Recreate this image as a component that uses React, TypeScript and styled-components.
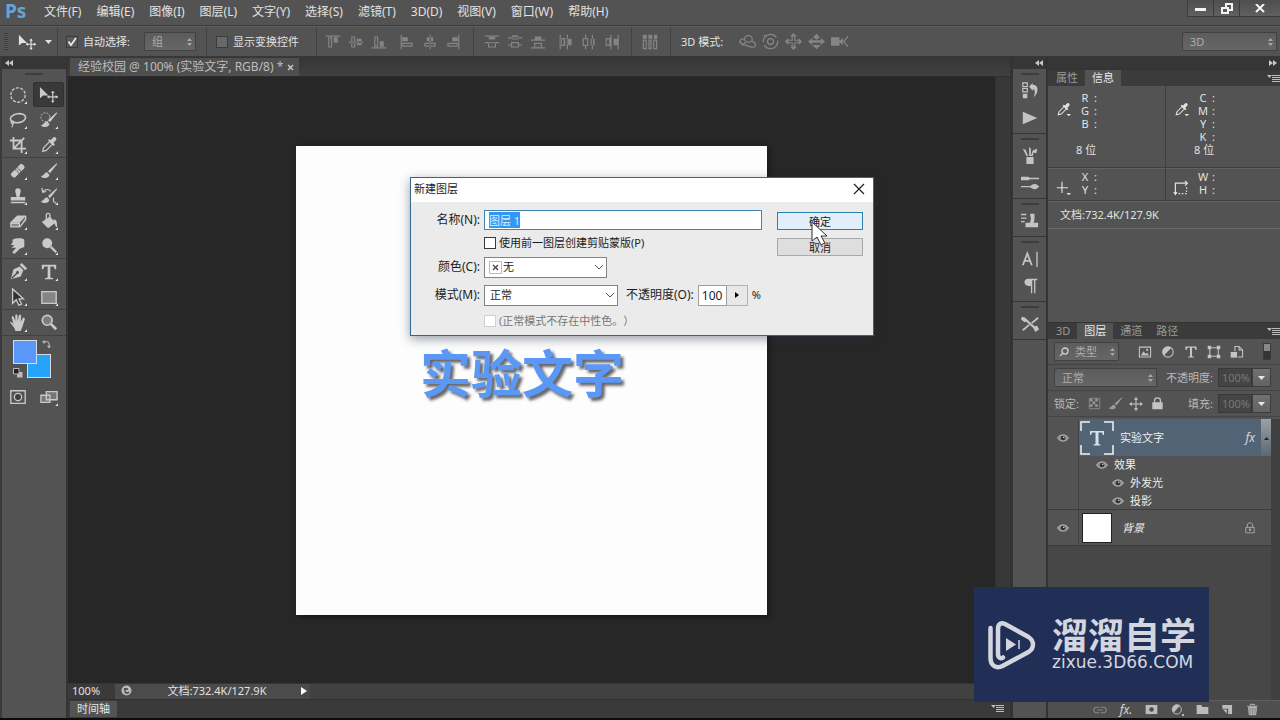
import React, { useEffect, useRef } from "react";
import styled, { createGlobalStyle, css } from "styled-components";

const GlobalStyle = createGlobalStyle`
  * { box-sizing: border-box; }
  body {
    margin: 0;
    background: #0b0b0b;
    color: #e2e2e2;
    font-family: "Noto Sans", "Noto Sans CJK SC", sans-serif;
    font-size: 11px;
    line-height: 16px;
  }
  button, input, select { font: inherit; color: inherit; margin: 0; }
  button { padding: 0; border: 0; background: none; }
  ul { list-style: none; margin: 0; padding: 0; }
  svg { display: block; flex: none; }
`;

/* ---------- frame ---------- */

const Screen = styled.div`
  position: relative;
  min-height: 100vh;
  display: flex;
  flex-direction: column;
  padding-bottom: 2px;
  overflow: hidden;
`;

const MenuBar = styled.header`
  display: flex;
  align-items: center;
  height: 26px;
  background: #535353;
  border-bottom: 1px solid #3a3a3a;
  font-size: 12px;
`;

const Logo = styled.span`
  width: 44px;
  padding: 0 0 3px 5px;
  color: #68a4d4;
  font-size: 19px;
  line-height: 22px;
  font-weight: 700;
`;

const Menus = styled.nav`
  display: flex;
  gap: 15px;
`;

const MenuButton = styled.button`
  white-space: nowrap;
  padding-bottom: 2px;
`;

const WindowControls = styled.div`
  display: flex;
  align-self: flex-start;
  margin-left: auto;
`;

const WindowButton = styled.button<{ $wide?: boolean }>`
  width: ${(p) => (p.$wide ? 41 : 26)}px;
  height: 17px;
  display: grid;
  place-items: center;
  color: #f4f4f4;
  background: linear-gradient(#4e4e4e, #606060);
  border: solid #3c3c3c;
  border-width: 0 0 1px 1px;
`;

const OptionsBar = styled.div`
  display: flex;
  align-items: stretch;
  height: 31px;
  background: #535353;
  border-top: 1px solid #606060;
  border-bottom: 1px solid #383838;
`;

const OptionGroup = styled.div<{ $start: number; $end: number; $gap?: number; $last?: boolean }>`
  display: flex;
  align-items: center;
  gap: ${(p) => p.$gap ?? 5}px;
  padding: 0 ${(p) => p.$end}px 0 ${(p) => p.$start}px;
  border-right: ${(p) => (p.$last ? "0" : "1px solid #424242")};
  white-space: nowrap;
`;

const IconStrip = styled.div<{ $dim?: boolean }>`
  display: flex;
  color: ${(p) => (p.$dim ? "#858585" : "#c4c4c4")};
`;

const IconButton = styled.button<{ $width?: number }>`
  width: ${(p) => p.$width ?? 23}px;
  height: 20px;
  display: grid;
  place-items: center;
`;

const GripDots = styled.span`
  width: 4px;
  height: 17px;
  background: repeating-linear-gradient(#3a3a3a 0 1px, #5d5d5d 1px 2px);
`;

const OptionLabel = styled.label`
  display: flex;
  align-items: center;
  gap: 5px;
`;

const DarkCheck = styled.input`
  appearance: none;
  width: 12px;
  height: 12px;
  background: #686868;
  border: 1px solid #3b3b3b;
  &:checked {
    background: #5b5b5b url("data:image/svg+xml,%3Csvg xmlns='http://www.w3.org/2000/svg' viewBox='0 0 10 10'%3E%3Cpath d='M1.5 4.5 4 8 9 1' fill='none' stroke='%23eee' stroke-width='1.6'/%3E%3C/svg%3E") center / 10px no-repeat;
  }
`;

const Stack = styled.span<{ $width: number; $height: number }>`
  display: grid;
  align-items: center;
  width: ${(p) => p.$width}px;
  height: ${(p) => p.$height}px;
  > * { grid-area: 1 / 1; }
  > svg { pointer-events: none; }
`;

const DarkSelectBox = styled.select<{ $indent?: number }>`
  appearance: none;
  width: 100%;
  height: 100%;
  padding: 0 14px 0 ${(p) => p.$indent ?? 7}px;
  color: #adadad;
  background: linear-gradient(#5c5c5c, #666);
  border: 1px solid #414141;
  border-radius: 1px;
  outline: 0;
`;

const EndMark = styled.svg`
  justify-self: end;
  margin-right: 3px;
`;

const StartMark = styled.svg`
  justify-self: start;
  margin-left: 5px;
`;

const Spacer = styled.span`
  flex: 1;
`;

const Workspace = styled.div`
  flex: 1;
  display: flex;
  align-items: stretch;
  background: #3a3a3a;
`;

/* ---------- tools ---------- */

const ToolsColumn = styled.aside`
  width: 68px;
  flex: none;
  display: flex;
  flex-direction: column;
  border-left: 2px solid #3a3a3a;
  border-right: 2px solid #343434;
`;

const CollapseBar = styled.button<{ $right?: boolean }>`
  display: flex;
  align-items: center;
  justify-content: ${(p) => (p.$right ? "flex-end" : "flex-start")};
  height: 12px;
  padding: 0 3px;
  background: #363636;
  color: #c8c8c8;
`;

const ToolsBody = styled.div`
  flex: 1;
  background: #535353;
`;

const Grip = styled.div<{ $space: number }>`
  height: ${(p) => p.$space}px;
  display: flex;
  justify-content: center;
  padding-top: 4px;
  &::before {
    content: "";
    width: 18px;
    height: 2px;
    background: #3d3d3d;
  }
`;

const ToolGroup = styled.div`
  display: grid;
  grid-template-columns: 31px 31px;
  border-bottom: 1px solid #414141;
  &:last-of-type { border-bottom: 0; }
`;

const ToolButton = styled.button<{ $active?: boolean }>`
  height: 25px;
  display: grid;
  place-items: center;
  color: #c9c9c9;
  ${(p) =>
    p.$active &&
    css`
      background: #393939;
      border: 1px solid #313131;
      border-radius: 2px;
    `}
`;

const SwatchGroup = styled.div`
  display: grid;
  grid-template-columns: 14px 10px 14px;
  grid-template-rows: 14px 10px 14px;
  padding: 4px 0 6px 11px;
`;

const Swatch = styled.button<{ $front?: boolean }>`
  grid-area: ${(p) => (p.$front ? "1 / 1 / 3 / 3" : "2 / 2 / 4 / 4")};
  z-index: ${(p) => (p.$front ? 1 : 0)};
  background: ${(p) => (p.$front ? "#5a97fb" : "#27a3fb")};
  border: 1px solid #d6dae2;
`;

const SwatchAction = styled.button<{ $swap?: boolean }>`
  grid-area: ${(p) => (p.$swap ? "1 / 3" : "3 / 1")};
  place-self: ${(p) => (p.$swap ? "start end" : "end start")};
  color: #bbb;
`;

/* ---------- document ---------- */

const DocumentColumn = styled.main`
  flex: 1;
  min-width: 0;
  display: flex;
  flex-direction: column;
`;

const DocTabs = styled.div`
  display: flex;
  align-items: flex-end;
  height: 20px;
  padding-left: 2px;
  background: linear-gradient(#363636, #404040);
  border-bottom: 1px solid #2c2c2c;
`;

const DocTab = styled.div`
  display: flex;
  align-items: center;
  gap: 4px;
  height: 18px;
  padding: 0 5px 0 8px;
  background: #4f4f4f;
  color: #bdbdbd;
  font-size: 12px;
  white-space: nowrap;
`;

const Stage = styled.div`
  flex: 1;
  display: flex;
  background: #272727;
`;

const Pasteboard = styled.div`
  flex: 1;
  display: grid;
  place-items: center;
`;

const VerticalScroll = styled.div`
  width: 15px;
  background: #383838;
  border-left: 1px solid #303030;
`;

const Artboard = styled.div`
  width: 471px;
  height: 469px;
  padding: 189px 0 0 124px;
  background: #fdfdfd;
  box-shadow: 2px 2px 5px #161616;
`;

const ArtText = styled.p`
  margin: 0;
  color: #5b97f5;
  font-family: "Noto Sans CJK SC", sans-serif;
  font-size: 51px;
  line-height: 72px;
  font-weight: 700;
  white-space: nowrap;
  text-shadow: 3px 3px 3px #66666b;
`;

const StatusBar = styled.div`
  display: flex;
  height: 16px;
  background: #414141;
  border-top: 1px solid #353535;
`;

const StatusCell = styled.div<{ $width: number; $lit?: boolean }>`
  width: ${(p) => p.$width}px;
  display: flex;
  align-items: center;
  justify-content: center;
  line-height: 13px;
  padding-bottom: 2px;
  background: ${(p) => (p.$lit ? "#4b4b4b" : "#3a3a3a")};
`;

const ZoomInput = styled.input`
  width: 100%;
  height: 13px;
  padding: 0 0 0 4px;
  border: 0;
  background: none;
`;

const TimelineBar = styled.div`
  display: flex;
  align-items: center;
  justify-content: space-between;
  height: 19px;
  padding: 0 6px 1px 1px;
  background: #3a3a3a;
  border-top: 1px solid #303030;
`;

/* ---------- side panels ---------- */

const DockColumn = styled.aside`
  width: 38px;
  flex: none;
  display: flex;
  flex-direction: column;
  border-left: 3px solid #333;
  border-right: 2px solid #333;
`;

const DockBody = styled.div`
  flex: 1;
  background: #535353;
  color: #c4c4c4;
`;

const DockGroup = styled.div`
  display: flex;
  flex-direction: column;
  align-items: center;
  padding-bottom: 2px;
  border-bottom: 1px solid #363636;
  > div { align-self: stretch; }
`;

const DockButton = styled.button`
  width: 31px;
  height: 27px;
  display: grid;
  place-items: center;
`;

const PanelColumn = styled.aside`
  width: 232px;
  flex: none;
  display: flex;
  flex-direction: column;
  background: #535353;
`;

const TabRow = styled.div`
  display: flex;
  align-items: stretch;
  height: 17px;
  flex: none;
  background: #3b3b3b;
  border-top: 1px solid #333;
`;

const PanelTab = styled.button<{ $active?: boolean }>`
  padding: 0 7px;
  color: ${(p) => (p.$active ? "#e6e6e6" : "#9a9a9a")};
  background: ${(p) => (p.$active ? "#535353" : "transparent")};
  white-space: nowrap;
  &:first-child { margin-left: 1px; }
`;

const PanelMenu = styled.button`
  margin-left: auto;
  color: #bdbdbd;
`;

const InfoGrid = styled.div<{ $tall?: boolean }>`
  display: grid;
  grid-template-columns: 118px 1fr;
  height: ${(p) => (p.$tall ? 82 : 33)}px;
  border-bottom: 1px solid #3f3f3f;
  box-shadow: 0 1px #626262;
`;

const InfoCell = styled.div<{ $top: number }>`
  display: grid;
  grid-template-columns: 30px 14px 1fr;
  grid-auto-rows: 13px;
  align-content: start;
  padding-top: ${(p) => p.$top}px;
  line-height: 13px;
  border-right: 1px solid #3f3f3f;
  &:last-child { border-right: 0; }
`;

const InfoIcon = styled.span`
  grid-area: 1 / 1 / 3 / 2;
  display: grid;
  place-items: end center;
`;

const InfoKey = styled.span`
  grid-column: 2;
  text-align: center;
`;

const InfoColon = styled.span`
  grid-column: 3;
  padding-left: 2px;
`;

const BitDepth = styled.span`
  grid-row: 5;
  grid-column: 1 / 4;
  padding-left: 28px;
`;

const DocSize = styled.p`
  margin: 0;
  height: 28px;
  padding: 6px 12px;
  border-bottom: 1px solid #696969;
`;

const InfoRest = styled.div`
  height: 93px;
`;

const LayerRow = styled.div`
  display: flex;
  align-items: center;
  height: 26px;
  flex: none;
  padding: 0 9px 0 6px;
  color: #b9b9b9;
  border-bottom: 1px solid #444;
  white-space: nowrap;
`;

const FieldLabel = styled.label<{ $push?: boolean }>`
  margin-left: ${(p) => (p.$push ? "auto" : "0")};
  margin-right: 5px;
`;

const Percent = styled.input`
  width: 34px;
  height: 19px;
  padding: 0 1px;
  text-align: right;
  color: #787878;
  background: #444;
  border: 1px solid #393939;
`;

const DropButton = styled.button`
  width: 19px;
  height: 19px;
  display: grid;
  place-items: center;
  color: #e8e8e8;
  background: linear-gradient(#727272, #626262);
  border: 1px solid #3c3c3c;
`;

const FilterSwitch = styled.button`
  width: 8px;
  height: 17px;
  margin-left: auto;
  background: linear-gradient(#888 0 7px, #343434 7px);
  border: 1px solid #3a3a3a;
`;

const LayerList = styled.ul`
  flex: 1;
  margin-top: 2px;
  padding-right: 9px;
  background: linear-gradient(to right, #474747 0 223px, #404040 223px);
`;

const LayerItem = styled.li<{ $height: number; $end?: boolean }>`
  display: flex;
  align-items: stretch;
  height: ${(p) => p.$height}px;
  background: #535353;
  border-bottom: ${(p) => (p.$end ? "1px solid #3c3c3c" : "0")};
`;

const EyeCell = styled.span`
  width: 31px;
  display: grid;
  place-items: center;
  border-right: 1px solid #424242;
`;

const LayerBody = styled.div<{ $selected?: boolean; $indent?: number }>`
  flex: 1;
  display: flex;
  align-items: center;
  gap: 6px;
  padding-left: ${(p) => p.$indent ?? 1}px;
  background: ${(p) => (p.$selected ? "#526376" : "transparent")};
`;

const Thumb = styled.span`
  width: 30px;
  height: 30px;
  margin: 0 2px;
  background: #fff;
  border: 1px solid #222;
`;

const LayerName = styled.span<{ $italic?: boolean }>`
  flex: 1;
  color: #f0f0f0;
  font-style: ${(p) => (p.$italic ? "italic" : "normal")};
  padding-left: ${(p) => (p.$italic ? 2 : 0)}px;
`;

const FxMark = styled.span`
  color: #d3d8dc;
  font-family: "Noto Sans", sans-serif;
  font-style: italic;
  font-size: 12px;
`;

const FxToggle = styled.button`
  width: 10px;
  align-self: stretch;
  display: grid;
  place-items: center;
  color: #222;
  background: linear-gradient(#9ba1a6, #5c6770);
`;

const EffectRow = styled.span`
  display: flex;
  align-items: center;
  gap: 6px;
  color: #eee;
`;

const LockMark = styled.span`
  padding-right: 15px;
  color: #ababab;
`;

const PanelFooter = styled.div`
  display: flex;
  align-items: center;
  justify-content: flex-end;
  height: 18px;
  flex: none;
  padding-right: 15px;
  color: #bcbcbc;
  background: #4f4f4f;
  border-top: 1px solid #5e5e5e;
`;

/* ---------- new layer dialog ---------- */

const Dialog = styled.form`
  position: absolute;
  left: 410px;
  top: 177px;
  width: 464px;
  color: #1c1c1c;
  background: #ebebeb;
  border: 1px solid #31688f;
  box-shadow: 0 3px 10px rgba(30, 45, 60, 0.45);
`;

const DialogTitle = styled.div`
  display: flex;
  align-items: center;
  justify-content: space-between;
  height: 24px;
  padding: 0 8px 2px 3px;
  background: #fff;
`;

const DialogBody = styled.div`
  display: grid;
  grid-template-columns: 351px 86px;
  column-gap: 15px;
  padding: 8px 10px 6px 0;
`;

const Fields = styled.div`
  display: flex;
  flex-direction: column;
`;

const Field = styled.div<{ $height: number; $muted?: boolean }>`
  display: flex;
  align-items: center;
  height: ${(p) => p.$height}px;
  color: ${(p) => (p.$muted ? "#777" : "inherit")};
  white-space: nowrap;
  text-spacing-trim: space-all;
`;

const Caption = styled.label`
  width: 73px;
  padding-right: 4px;
  text-align: right;
  font-size: 12px;
`;

const NameInput = styled.input`
  flex: 1;
  min-width: 0;
  height: 20px;
  padding: 0 4px;
  background: #fff;
  border: 1px solid #3c87b3;
  outline: 0;
  &::selection { background: #3296f3; color: #d8efff; }
`;

const CheckLine = styled.label`
  display: flex;
  align-items: center;
  gap: 3px;
  margin-left: 73px;
`;

const LightCheck = styled.input`
  appearance: none;
  width: 12px;
  height: 12px;
  background: #fff;
  border: 1px solid #3a3a3a;
  &:disabled { border-color: #d0d0d0; }
`;

const LightSelect = styled.select<{ $indent?: number }>`
  appearance: none;
  width: 100%;
  height: 100%;
  padding: 0 20px 0 ${(p) => p.$indent ?? 5}px;
  background: #fff;
  border: 1px solid #828282;
`;

const OpacityLabel = styled.label`
  margin: 0 4px 0 8px;
  font-size: 12px;
`;

const OpacityInput = styled.input`
  width: 29px;
  height: 21px;
  padding: 0 3px;
  background: #fff;
  border: 1px solid #9d9d9d;
  font-size: 12px;
`;

const OpacityButton = styled.button`
  width: 21px;
  height: 21px;
  margin-right: 4px;
  display: grid;
  place-items: center;
  background: #e8e8e8;
  border: 1px solid #b3b3b3;
  border-left: 0;
`;

const DialogActions = styled.div`
  display: flex;
  flex-direction: column;
  gap: 8px;
  padding-top: 2px;
`;

const DialogButton = styled.button<{ $primary?: boolean }>`
  height: 18px;
  padding-top: 1px;
  line-height: 15px;
  background: ${(p) => (p.$primary ? "#e2effa" : "#dedede")};
  border: 1px solid ${(p) => (p.$primary ? "#2b7fae" : "#a9a9a9")};
`;

const Pointer = styled.svg`
  position: absolute;
  left: 811px;
  top: 221px;
`;

/* ---------- brand badge ---------- */

const Badge = styled.div`
  position: absolute;
  right: 71px;
  bottom: 18px;
  width: 235px;
  height: 115px;
  display: flex;
  align-items: center;
  gap: 16px;
  padding-left: 13px;
  background: #212f56;
  color: #d3d6df;
`;

const BadgeText = styled.div`
  display: flex;
  flex-direction: column;
  padding-bottom: 5px;
`;

const BadgeName = styled.strong`
  font-family: "Noto Sans CJK SC", sans-serif;
  font-size: 36px;
  line-height: 40px;
  font-weight: 700;
`;

const BadgeUrl = styled.span`
  font-family: "DejaVu Sans", sans-serif;
  font-size: 17px;
  line-height: 18px;
`;

/* ---------- icons ---------- */

type GlyphProps = { size?: number; children: React.ReactNode; corner?: boolean };

const Glyph = ({ size = 16, children, corner }: GlyphProps) => (
  <svg width={size} height={size} viewBox="0 0 20 20" fill="none" stroke="currentColor" strokeWidth="1.5" aria-hidden>
    {children}
    {corner && <path d="M20 17v3h-3z" fill="#e5e5e5" stroke="none" />}
  </svg>
);

const fill = { fill: "currentColor", stroke: "none" };

const Arrows = () => (
  <EndMark width="7" height="10" viewBox="0 0 7 10" fill="#a8a8a8" aria-hidden>
    <path d="M1 4 3.500 1 6 4zM1 6h5L3.500 9z" />
  </EndMark>
);

const Caret = ({ up }: { up?: boolean }) => (
  <svg width="7" height="4" viewBox="0 0 7 4" fill="currentColor" aria-hidden>
    <path d={up ? "M1 4h5L3.500 1z" : "M0 0h7L3.500 4z"} />
  </svg>
);

const DoubleArrow = ({ flip }: { flip?: boolean }) => (
  <svg width="8" height="6" viewBox="0 0 8 6" fill="currentColor" aria-hidden>
    <path d={flip ? "M0 0v6l4-3zM4 0v6l4-3z" : "M4 0v6L0 3zM8 0v6L4 3z"} />
  </svg>
);

const MenuGlyph = () => (
  <svg width="13" height="9" viewBox="0 0 13 9" fill="currentColor" aria-hidden>
    <path d="M0 1h5L2.500 4zM5 1h8v1H5zM5 3h8v1H5zM5 5h8v1H5zM5 7h8v1H5z" />
  </svg>
);

const Eye = () => (
  <svg width="12" height="10" viewBox="0 0 12 10" aria-hidden>
    <path d="M.5 5C3 .8 9 .8 11.500 5 9 9.200 3 9.200.5 5z" fill="#8e8e8e" stroke="#c2c2c2" strokeWidth=".8" />
    <circle cx="6" cy="5" r="2.300" fill="#333" />
    <circle cx="6.800" cy="4.200" r=".8" fill="#ddd" />
  </svg>
);

const MoveGlyph = ({ size = 19 }: { size?: number }) => (
  <Glyph size={size}>
    <path d="M1 2v12l3.500-3H10z" {...fill} />
    <path d="M14.500 7v11M9 12.500h11" strokeWidth="1.300" />
    <path d="m14.500 6 2 2.500h-4zM14.500 19l2-2.500h-4zM8.500 12.500l2.500-2v4zM20 12.500l-2.500-2v4z" {...fill} />
  </Glyph>
);

const Eyedropper = () => (
  <>
    <path d="m3 17 1-4 7-7 3 3-7 7z" strokeWidth="1.400" />
    <path d="m9 5 6 6 1.500-1.500-1.500-2 3-3c1-2-1.500-4-3-3l-3 3-2-1z" {...fill} />
  </>
);

const InfoDropper = () => (
  <Glyph size={15}>
    <Eyedropper />
    <path d="M14 16h6l-3 3z" {...fill} />
  </Glyph>
);

const Brush = () => (
  <>
    <path d="M18.500 1.500 9 10l2 2.500 8-10z" {...fill} />
    <path d="M8 11.500c-3 0-3 3.500-7 4.500 3 2.500 8.500 2.500 9.500-1.500z" {...fill} />
  </>
);

const toolGroups: { name: string; art: React.ReactNode; active?: boolean; plain?: boolean }[][] = [
  [
    { name: "椭圆选框工具", art: <circle cx="10" cy="10" r="8" strokeDasharray="3.500 1.500" /> },
    { name: "移动工具", art: null, active: true, plain: true },
    {
      name: "套索工具",
      art: (
        <>
          <ellipse cx="10" cy="8" rx="8.500" ry="5" transform="rotate(-8 10 8)" strokeWidth="1.800" />
          <path d="M4 11c-2 1-2 3 0 3s2-2 0-3m0 3c1 2 0 3-1 4" />
        </>
      ),
    },
    {
      name: "快速选择工具",
      art: (
        <>
          <circle cx="6" cy="7" r="5" strokeDasharray="2 1.500" strokeWidth="1" />
          <Brush />
        </>
      ),
    },
    { name: "裁剪工具", art: <path d="M5 1v13h14M1 5h13v14M17 2 5 14" strokeWidth="2" /> },
    { name: "吸管工具", art: <Eyedropper /> },
  ],
  [
    {
      name: "污点修复画笔工具",
      art: (
        <>
          <path d="m2.500 12.500 10-10c2-1.500 6 2.500 4.500 4.500l-10 10c-2 1.500-6-2.500-4.500-4.500z" {...fill} />
          <path d="m7 8 4.500 4.500M9 6l4.500 4.500" stroke="#666" strokeDasharray="1.500 1" />
        </>
      ),
    },
    { name: "画笔工具", art: <Brush /> },
    {
      name: "仿制图章工具",
      art: <path d="M7 5c-1-5 7-5 6 0l-1.500 6H18v4H2v-4h6.500zM2 16.500h16V18H2z" {...fill} />,
    },
    {
      name: "历史记录画笔工具",
      art: (
        <>
          <Brush />
          <path d="M3 5c3-3 7-3 9 0M2 1l1 5 4-1M15 12v4l3 2" strokeWidth="1.300" />
        </>
      ),
    },
    {
      name: "橡皮擦工具",
      art: (
        <>
          <path d="m1 12 8-8h10l-7 8z" {...fill} />
          <path d="M2 12.500h9.500v4H2zM12 16.500l6.500-8v-4" fill="#8a8a8a" />
        </>
      ),
    },
    {
      name: "油漆桶工具",
      art: (
        <>
          <path d="m2 11 9-6 6 7-8 6z" {...fill} />
          <path d="M7 9V3c0-2 4-2 4 0v5" />
          <path d="M15 8c4 0 4 4 4 9-2 0-2-4-4-5z" {...fill} />
        </>
      ),
    },
    {
      name: "涂抹工具",
      art: <path d="M4 3c4-2 11-2 13 0v8l-5 2-6 6-2.500-2L8 12H3l3-3H2l2-3z" {...fill} />,
    },
    {
      name: "减淡工具",
      art: (
        <>
          <circle cx="8" cy="7" r="5.500" {...fill} />
          <path d="m12 11 6 6" strokeWidth="2.500" />
        </>
      ),
    },
  ],
  [
    {
      name: "钢笔工具",
      art: (
        <>
          <path d="m2 18 3-11 7-3 4 4-3 7z" {...fill} />
          <path d="m13 1 6 6" strokeWidth="3" />
          <path d="m3 17 6-6" stroke="#484848" />
          <circle cx="9.500" cy="10.500" r="1.500" fill="#484848" stroke="none" />
        </>
      ),
    },
    { name: "文字工具", art: <path d="M2 2h16v5h-1.500L15 4h-3.500v12l3 1v1h-9v-1l3-1V4H5L3.500 7H2z" {...fill} /> },
    { name: "路径选择工具", art: <path d="M4 1v16l4-4 3 6 3-1-3-6h5z" fill="#303030" /> },
    { name: "矩形工具", art: <path d="M2 4h16v13H2z" fill="#858585" /> },
  ],
  [
    {
      name: "抓手工具",
      art: <path d="M1 9c1-1 3 1 4 2L3 4c0-2 2-2 2.500 0L7 8V2c0-2 2.500-2 2.500 0v6L11 2c0-2 3-1 2.500 0L13 9l2-4c1-2 3-1 2.500 1L15 14l-2 5H7c0-3-4-7-6-10z" {...fill} />,
    },
    {
      name: "缩放工具",
      art: (
        <>
          <circle cx="8" cy="7" r="5.500" fill="#7c7c7c" strokeWidth="1.800" />
          <path d="m12 11 6 6" strokeWidth="3" />
        </>
      ),
      plain: true,
    },
  ],
];

const alignArt = [
  "M1 2h18v1.500H1zM11 4h5v7h-5zM4 4h5v13H4zM5.500 5.500v10h2v-10z",
  "M1 9.500h18V11H1zM11 6h6v8h-6zM4 3h5v14H4zM5.500 4.500v11h2v-11z",
  "M1 16.500h18V18H1zM11 9h5v7h-5zM4 3h5v13H4zM5.500 4.500v10h2v-10z",
];
const alignSideArt = [
  "M2 1h1.500v18H2zM4 4h7v5H4zM4 11h13v5H4zM5.500 12.500v2h10v-2z",
  "M9.500 1H11v18H9.500zM6 4h8v5H6zM3 11h14v5H3zM4.500 12.500v2h11v-2z",
  "M16.500 1H18v18h-1.500zM9 4h7v5H9zM3 11h13v5H3zM4.500 12.500v2h10v-2z",
];
const spreadArt = [
  "M1 2h18v1.500H1zM6 3h8v4H6zM1 10h18v1.500H1zM5 11h10v6H5zM6.500 12v3.500h7V12z",
  "M1 4h18v1.500H1zM6 2h8v5H6zM1 13h4v1.500H1zM15 13h4v1.500h-4zM5 10h10v7H5zM6.500 11.500v4h7v-4z",
  "M1 7h18v1.500H1zM6 3h8v4H6zM1 16.500h18V18H1zM5 11h10v6H5zM6.500 12.500V16h7v-3.500z",
];
const spreadSideArt = [
  "M2 1h1.500v18H2zM3 5h6v10H3zM4.500 6.500v7H7v-7zM11 1h1.500v18H11zM12 6h5v8h-5z",
  "M2 5h7v10H2zM3.500 6.500v7h4v-7zM5 1h1.500v4H5zM5 15h1.500v4H5zM13.500 1H15v18h-1.500zM12 6h5v8h-5z",
  "M8 1h1.500v18H8zM2 5h6v10H2zM3.500 6.500v7h3v-7zM17 1h1.500v18H17zM12 6h5v8h-5z",
];

const Shape = ({ d }: { d: string }) => (
  <Glyph>
    <path d={d} {...fill} fillRule="evenodd" />
  </Glyph>
);

const alignNames = ["顶对齐", "垂直居中对齐", "底对齐"];
const alignSideNames = ["左对齐", "水平居中对齐", "右对齐"];
const spreadNames = ["按顶分布", "垂直居中分布", "按底分布"];
const spreadSideNames = ["按左分布", "水平居中分布", "按右分布"];

const Strip = ({ names, art }: { names: string[]; art: string[] }) => (
  <IconStrip $dim>
    {names.map((name, i) => (
      <IconButton key={name} aria-label={name}>
        <Shape d={art[i]} />
      </IconButton>
    ))}
  </IconStrip>
);

const modes3d: [string, React.ReactNode][] = [
  ["旋转 3D 对象", <><ellipse cx="11" cy="7" rx="4.500" ry="4" /><path d="M7 7c-8 0-8 6 0 7l8 3c6 0 6-6 0-7M1 10l3 4 4-3" /></>],
  ["滚动 3D 对象", <><circle cx="10" cy="10" r="8.500" strokeDasharray="22 4" /><circle cx="10" cy="10" r="3.500" /><path d="m2 2 4 1-3 3z" {...fill} /></>],
  ["拖动 3D 对象", <><path d="M8.500 2v6.500H2M11.500 2v6.500H18M8.500 18v-6.500H2M11.500 18v-6.500H18" strokeWidth="1.300" /><path d="M6 4l4-4 4 4zM6 16l4 4 4-4zM4 6l-4 4 4 4zM16 6l4 4-4 4z" {...fill} /></>],
  ["滑动 3D 对象", <><path d="M0 10l5-4v2.500h10V6l5 4-5 4v-2.500H5V14zM6 5l4-4 4 4-4 3zM5 14h10l-5 5z" {...fill} /></>],
  ["缩放 3D 对象", <><path d="M0 5h10v10H0zM10 9l4-3v8l-4-3z" {...fill} /><path d="m20 4-5 6 5 6" /></>],
];

const lockPath = "M3 9h14v9H3zM5.500 9V5c0-5 9-5 9 0v4";

const dockGroups: [string, React.ReactNode][][] = [
  [
    ["历史记录", <><path d="M2 1h5v4H2zM2 7h5v4H2z" strokeWidth="1.300" /><path d="M2 13h5v5H2zM9 5l4-4v2c7 0 7 9 1 14 2-5 2-9-1-9v2z" {...fill} /></>],
    ["动作", <path d="m2 3 16 7-16 7z" {...fill} />],
  ],
  [
    ["画笔预设", <><path d="M6 11h8v8H6zM2 2l3 1 3 7H6zM9 0l2 2v8H9zM13 4l5-2-1 5-3-1-1 4h-2z" {...fill} /></>],
    ["画笔", <><path d="M0 5h20M0 14h20" /><path d="M0 3h8l3 2-3 2H0zM10 14c2-4 9-4 9 0s-7 4-9 0z" {...fill} /></>],
  ],
  [["仿制源", <><path d="M10 2h5v6l-1 4h5v5H5v-5h5l1-4zM0 2h6v1.500H0zM0 6h6v1.500H0zM0 10h4v1.500H0z" {...fill} /></>]],
  [
    ["字符", <><path d="m2 17 5-13 5 13M4 12h6" strokeWidth="2" /><path d="M17 2h1.500v17H17z" {...fill} /></>],
    ["段落", <path d="M8 2h10v1.500h-2V18h-1.500V3.500h-2V18H11v-8C2 11 2 2 8 2z" {...fill} />],
  ],
  [["工具预设", <><path d="m2 17 7-6M12 9l7-6" strokeWidth="2" /><path d="m5 5 11 10" strokeWidth="2.500" /><path d="M1 2l4 1 2 4-3 1-4-3zM13 13l5-1 2 4-4 3z" {...fill} /></>]],
];

const filterArt: [string, React.ReactNode][] = [
  ["像素图层滤镜", <><path d="M2 3h16v14H2z" /><path d="m4 15 4-6 3 4 2-2 3 4z" {...fill} /><circle cx="13" cy="7" r="1.500" {...fill} /></>],
  ["调整图层滤镜", <><circle cx="10" cy="10" r="7.500" /><path d="M15 4 4 15C-2 7 8-1 15 4z" {...fill} /></>],
  ["文字图层滤镜", <path d="M2 2h16v5h-1.500L15 4h-3.500v12l3 1v1h-9v-1l3-1V4H5L3.500 7H2z" {...fill} />],
  ["形状图层滤镜", <><path d="M4 4h12v12H4z" /><path d="M1 1h5v5H1zM14 1h5v5h-5zM1 14h5v5H1zM14 14h5v5h-5z" {...fill} /></>],
  ["智能对象滤镜", <><path d="M7 9V2h6l5 5v10h-7M13 2v5h5" /><path d="M1 10h9v8H1z" {...fill} /></>],
];

const footerArt: [string, React.ReactNode, number][] = [
  ["添加图层蒙版", <><path d="M1 3h18v14H1z" {...fill} /><circle cx="10" cy="10" r="3.500" fill="#4c4c4c" stroke="none" /></>, 25],
  ["创建调整图层", <><circle cx="9" cy="10" r="7" /><path d="M14 4 4 15C-2 7 7-1 14 4z" {...fill} /><path d="M17 17h3v3h-3z" {...fill} /></>, 26],
  ["创建新组", <path d="M1 3h7l2 3h9v11H1z" {...fill} />, 25],
  ["创建新图层", <path d="M2 3h15v14h-6v-8H2zM3 10h6v6z" {...fill} />, 25],
  ["删除图层", <><path d="M4 7h12l-1 11H5z" fill="#888" /><path d="M2 5h16M7 4V2h6v2M8 8v9M12 8v9" /></>, 25],
];

/* ---------- pieces ---------- */

const DarkSelect = ({ label, width, height, value, indent, search }: {
  label: string; width: number; height: number; value: string; indent?: number; search?: boolean;
}) => (
  <Stack $width={width} $height={height}>
    <DarkSelectBox aria-label={label} defaultValue={value} $indent={indent}>
      <option>{value}</option>
    </DarkSelectBox>
    {search && (
      <StartMark width="10" height="10" viewBox="0 0 10 10" fill="none" stroke="#d0d0d0" strokeWidth="1.300" aria-hidden>
        <circle cx="6" cy="4" r="3" />
        <path d="M4 6 1 9" />
      </StartMark>
    )}
    <Arrows />
  </Stack>
);

const InfoBlock = ({ keys, top, icon, bits }: { keys: string[]; top: number; icon: React.ReactNode; bits?: boolean }) => (
  <InfoCell $top={top}>
    <InfoIcon>{icon}</InfoIcon>
    {keys.map((k, i) => (
      <React.Fragment key={k}>
        <InfoKey style={{ gridRow: i + 1 }}>{k}</InfoKey>
        <InfoColon style={{ gridRow: i + 1 }}>:</InfoColon>
      </React.Fragment>
    ))}
    {bits && <BitDepth>8 位</BitDepth>}
  </InfoCell>
);

const menus = ["文件(F)", "编辑(E)", "图像(I)", "图层(L)", "文字(Y)", "选择(S)", "滤镜(T)", "3D(D)", "视图(V)", "窗口(W)", "帮助(H)"];

const NewLayerDialog = () => {
  const nameRef = useRef<HTMLInputElement>(null);
  useEffect(() => {
    nameRef.current?.focus();
    nameRef.current?.select();
  }, []);

  const chevron = (
    <EndMark width="10" height="6" viewBox="0 0 10 6" fill="none" stroke="#555" aria-hidden>
      <path d="m1 1 4 4 4-4" />
    </EndMark>
  );

  return (
    <Dialog role="dialog" aria-label="新建图层" onSubmit={(e) => e.preventDefault()}>
      <DialogTitle>
        新建图层
        <button type="button" aria-label="关闭">
          <svg width="12" height="12" viewBox="0 0 12 12" stroke="#222" strokeWidth="1.200" aria-hidden>
            <path d="m1 1 10 10M11 1 1 11" />
          </svg>
        </button>
      </DialogTitle>
      <DialogBody>
        <Fields>
          <Field $height={20}>
            <Caption htmlFor="layer-name">名称(N):</Caption>
            <NameInput id="layer-name" ref={nameRef} defaultValue="图层 1" />
          </Field>
          <Field $height={26}>
            <CheckLine>
              <LightCheck type="checkbox" />
              使用前一图层创建剪贴蒙版(P)
            </CheckLine>
          </Field>
          <Field $height={22}>
            <Caption htmlFor="layer-color">颜色(C):</Caption>
            <Stack $width={123} $height={21}>
              <LightSelect id="layer-color" $indent={18}>
                <option>无</option>
              </LightSelect>
              <StartMark width="13" height="13" viewBox="0 0 13 13" fill="none" stroke="#444" aria-hidden>
                <path d="M.5.5h12v12H.5z" stroke="#bbb" />
                <path d="m4 4 5 5M9 4 4 9" strokeWidth="1.300" />
              </StartMark>
              {chevron}
            </Stack>
          </Field>
          <Field $height={34}>
            <Caption htmlFor="layer-mode">模式(M):</Caption>
            <Stack $width={134} $height={21}>
              <LightSelect id="layer-mode">
                <option>正常</option>
              </LightSelect>
              {chevron}
            </Stack>
            <OpacityLabel htmlFor="layer-opacity">不透明度(O):</OpacityLabel>
            <OpacityInput id="layer-opacity" defaultValue="100" />
            <OpacityButton type="button" aria-label="调整不透明度">
              <svg width="4" height="6" viewBox="0 0 4 6" aria-hidden><path d="M0 0v6l4-3z" /></svg>
            </OpacityButton>
            %
          </Field>
          <Field $height={17} $muted>
            <CheckLine>
              <LightCheck type="checkbox" disabled />
              (正常模式不存在中性色。）
            </CheckLine>
          </Field>
        </Fields>
        <DialogActions>
          <DialogButton $primary>确定</DialogButton>
          <DialogButton type="button">取消</DialogButton>
        </DialogActions>
      </DialogBody>
    </Dialog>
  );
};

export default function App() {
  return (
    <Screen>
      <GlobalStyle />
      <MenuBar>
        <Logo>Ps</Logo>
        <Menus aria-label="主菜单">
          {menus.map((m) => <MenuButton key={m}>{m}</MenuButton>)}
        </Menus>
        <WindowControls>
          <WindowButton aria-label="最小化">
            <svg width="11" height="10" fill="currentColor" aria-hidden><path d="M0 5h11v3H0z" /></svg>
          </WindowButton>
          <WindowButton aria-label="还原">
            <svg width="12" height="11" fill="none" stroke="currentColor" strokeWidth="2" aria-hidden>
              <path d="M1 5h6v5H1zM5 4V1h6v6H8" />
            </svg>
          </WindowButton>
          <WindowButton $wide aria-label="关闭">
            <svg width="10" height="9" stroke="currentColor" strokeWidth="2" aria-hidden><path d="m1 0 8 8M9 0 1 8" /></svg>
          </WindowButton>
        </WindowControls>
      </MenuBar>

      <OptionsBar>
        <OptionGroup $start={4} $end={5} $gap={1}>
          <GripDots />
          <IconButton aria-label="当前工具" $width={35}><MoveGlyph size={18} /></IconButton>
          <Caret />
        </OptionGroup>
        <OptionGroup $start={8} $end={10} $gap={14}>
          <OptionLabel><DarkCheck type="checkbox" defaultChecked />自动选择:</OptionLabel>
          <DarkSelect label="自动选择对象" width={52} height={19} value="组" />
        </OptionGroup>
        <OptionGroup $start={9} $end={17}>
          <OptionLabel><DarkCheck type="checkbox" />显示变换控件</OptionLabel>
        </OptionGroup>
        <OptionGroup $start={5} $end={8}>
          <Strip names={alignNames} art={alignArt} />
          <Strip names={alignSideNames} art={alignSideArt} />
        </OptionGroup>
        <OptionGroup $start={7} $end={7}>
          <Strip names={spreadNames} art={spreadArt} />
          <Strip names={spreadSideNames} art={spreadSideArt} />
        </OptionGroup>
        <OptionGroup $start={7} $end={8}>
          <IconStrip $dim>
            <IconButton aria-label="自动对齐图层">
              <Shape d="M1 1h5v5H1zM8 1h5v5H8zM15 1h4v5h-4zM1 7h5v12H1zM2.500 8.500v9h2v-9zM8 7h4v12H8zM9.500 8.500v9h1v-9zM14 7h5v12h-5zM15.500 8.500v9h2v-9z" />
            </IconButton>
          </IconStrip>
        </OptionGroup>
        <OptionGroup $start={10} $end={0} $gap={13} $last>
          <span>3D 模式:</span>
          <IconStrip $dim>
            {modes3d.map(([name, art]) => (
              <IconButton key={name} aria-label={name}><Glyph size={17}>{art}</Glyph></IconButton>
            ))}
          </IconStrip>
        </OptionGroup>
        <Spacer />
        <OptionGroup $start={0} $end={3} $last>
          <DarkSelect label="工作区" width={95} height={19} value="3D" />
        </OptionGroup>
      </OptionsBar>

      <Workspace>
        <ToolsColumn aria-label="工具">
          <CollapseBar aria-label="折叠工具"><DoubleArrow /></CollapseBar>
          <ToolsBody>
            <Grip $space={13} />
            {toolGroups.map((group) => (
              <ToolGroup key={group[0].name}>
                {group.map((t) => (
                  <ToolButton key={t.name} aria-label={t.name} $active={t.active}>
                    {t.active ? <MoveGlyph /> : <Glyph size={18} corner={!t.plain}>{t.art}</Glyph>}
                  </ToolButton>
                ))}
              </ToolGroup>
            ))}
            <SwatchGroup>
              <Swatch $front aria-label="前景色" />
              <Swatch aria-label="背景色" />
              <SwatchAction $swap aria-label="切换颜色">
                <Glyph size={9}><path d="M3 4h8c4 0 5 2 5 9" strokeWidth="2.500" /><path d="M6 0v9L0 4.500zM11 13h9l-4.500 6z" {...fill} /></Glyph>
              </SwatchAction>
              <SwatchAction aria-label="默认颜色">
                <Glyph size={10}><path d="M8 8h11v11H8z" {...fill} /><path d="M1 1h11v11H1z" fill="#222" strokeWidth="2" /></Glyph>
              </SwatchAction>
            </SwatchGroup>
            <ToolGroup>
              <ToolButton aria-label="快速蒙版"><Glyph size={18}><path d="M2 3h16v14H2z" /><circle cx="10" cy="10" r="4" fill="#3d3d3d" /></Glyph></ToolButton>
              <ToolButton aria-label="屏幕模式"><Glyph size={18} corner><path d="M1 8h10v8H1zM7 4h12v9H7z" fill="#777" /></Glyph></ToolButton>
            </ToolGroup>
          </ToolsBody>
        </ToolsColumn>

        <DocumentColumn>
          <DocTabs>
            <DocTab>
              经验校园 @ 100% (实验文字, RGB/8) *
              <button aria-label="关闭文档">
                <svg width="7" height="7" viewBox="0 0 7 7" stroke="#ccc" strokeWidth="1.300" aria-hidden><path d="m1 1 5 5M6 1 1 6" /></svg>
              </button>
            </DocTab>
          </DocTabs>
          <Stage>
            <Pasteboard>
              <Artboard><ArtText>实验文字</ArtText></Artboard>
            </Pasteboard>
            <VerticalScroll />
          </Stage>
          <StatusBar>
            <StatusCell $width={47}><ZoomInput aria-label="缩放比例" defaultValue="100%" /></StatusCell>
            <StatusCell $width={22} $lit>
              <svg width="11" height="11" viewBox="0 0 11 11" aria-hidden>
                <circle cx="5.500" cy="5.500" r="5" fill="#b9b9b9" />
                <path d="M4 3v3c0 3 3 2 4 1M3 4h4" fill="none" stroke="#444" strokeWidth="1.300" />
              </svg>
            </StatusCell>
            <StatusCell $width={160} $lit>文档:732.4K/127.9K</StatusCell>
            <StatusCell $width={13} $lit>
              <button aria-label="状态栏选项">
                <svg width="6" height="8" fill="#fff" aria-hidden><path d="M0 0v8l6-4z" /></svg>
              </button>
            </StatusCell>
          </StatusBar>
          <TimelineBar>
            <PanelTab $active>时间轴</PanelTab>
            <PanelMenu aria-label="时间轴菜单"><MenuGlyph /></PanelMenu>
          </TimelineBar>
        </DocumentColumn>

        <DockColumn aria-label="折叠面板">
          <CollapseBar $right aria-label="展开面板"><DoubleArrow /></CollapseBar>
          <DockBody>
            {dockGroups.map((group) => (
              <DockGroup key={group[0][0]}>
                <Grip $space={8} />
                {group.map(([name, art]) => (
                  <DockButton key={name} aria-label={name}><Glyph size={18}>{art}</Glyph></DockButton>
                ))}
              </DockGroup>
            ))}
          </DockBody>
        </DockColumn>

        <PanelColumn>
          <CollapseBar $right aria-label="折叠面板组"><DoubleArrow flip /></CollapseBar>
          <TabRow>
            <PanelTab>属性</PanelTab>
            <PanelTab $active>信息</PanelTab>
            <PanelMenu aria-label="信息面板菜单"><MenuGlyph /></PanelMenu>
          </TabRow>
          <InfoGrid $tall>
            <InfoBlock keys={["R", "G", "B"]} top={5} bits icon={<InfoDropper />} />
            <InfoBlock keys={["C", "M", "Y", "K"]} top={5} bits icon={<InfoDropper />} />
          </InfoGrid>
          <InfoGrid>
            <InfoBlock keys={["X", "Y"]} top={2} icon={<Glyph size={15}><path d="M8 1v15M1 9h15" /><path d="M14 16h6l-3 3z" {...fill} /></Glyph>} />
            <InfoBlock keys={["W", "H"]} top={2} icon={<Glyph size={16}><path d="M3 17V4h14M1 15l2 3 2-3M15 1l3 3-3 3" /><path d="M7 17h10V8" strokeDasharray="2 2" /></Glyph>} />
          </InfoGrid>
          <DocSize>文档:732.4K/127.9K</DocSize>
          <InfoRest />
          <TabRow>
            <PanelTab>3D</PanelTab>
            <PanelTab $active>图层</PanelTab>
            <PanelTab>通道</PanelTab>
            <PanelTab>路径</PanelTab>
            <PanelMenu aria-label="图层面板菜单"><MenuGlyph /></PanelMenu>
          </TabRow>
          <LayerRow>
            <DarkSelect label="图层滤镜类型" width={65} height={19} value="类型" indent={20} search />
            <Spacer />
            <IconStrip>
              {filterArt.map(([name, art]) => (
                <IconButton key={name} aria-label={name}><Glyph size={14}>{art}</Glyph></IconButton>
              ))}
            </IconStrip>
            <Spacer />
            <FilterSwitch aria-label="图层滤镜开关" />
          </LayerRow>
          <LayerRow>
            <DarkSelect label="混合模式" width={103} height={19} value="正常" />
            <FieldLabel $push htmlFor="opacity">不透明度:</FieldLabel>
            <Percent id="opacity" defaultValue="100%" disabled />
            <DropButton aria-label="不透明度滑块"><Caret /></DropButton>
          </LayerRow>
          <LayerRow>
            <FieldLabel as="span">锁定:</FieldLabel>
            <IconStrip>
              <IconButton $width={21} aria-label="锁定透明像素"><Glyph size={13}><path d="M2 2h16v16H2z" stroke="#8b8b8b" /><path d="M3 3h4v4H3zM11 3h4v4h-4zM7 7h4v4H7zM3 11h4v4H3zM11 11h4v4h-4z" fill="#999" stroke="none" /></Glyph></IconButton>
              <IconButton $width={21} aria-label="锁定图像像素"><Glyph size={15}><g color="#9c9c9c"><Brush /></g></Glyph></IconButton>
              <IconButton $width={21} aria-label="锁定位置"><Glyph size={14}><path d="M10 2v16M2 10h16" /><path d="m10 0 3 4H7zM10 20l3-4H7zM0 10l4-3v6zM20 10l-4-3v6z" {...fill} /></Glyph></IconButton>
              <IconButton $width={21} aria-label="锁定全部"><Glyph size={13}><path d={lockPath} strokeWidth="2" /><path d="M3 9h14v9H3z" {...fill} /></Glyph></IconButton>
            </IconStrip>
            <FieldLabel $push htmlFor="fill">填充:</FieldLabel>
            <Percent id="fill" defaultValue="100%" disabled />
            <DropButton aria-label="填充滑块"><Caret /></DropButton>
          </LayerRow>
          <LayerList>
            <LayerItem $height={37}>
              <EyeCell><Eye /></EyeCell>
              <LayerBody $selected>
                <svg width="34" height="34" viewBox="0 0 34 34" aria-hidden>
                  <path d="M1 10V1h9M24 1h9v9M33 24v9h-9M10 33H1v-9" fill="none" stroke="#f0f3f5" strokeWidth="1.500" />
                  <path d="M10 10h14v4h-1l-1-2.500h-3.500V23l2 .5v1h-7v-1l2-.5V11.500H12L11 14h-1z" fill="#d5e2ee" />
                </svg>
                <LayerName>实验文字</LayerName>
                <FxMark>fx</FxMark>
                <FxToggle aria-label="折叠效果"><Caret up /></FxToggle>
              </LayerBody>
            </LayerItem>
            <LayerItem $height={18}>
              <EyeCell />
              <LayerBody $indent={17}><EffectRow><Eye />效果</EffectRow></LayerBody>
            </LayerItem>
            <LayerItem $height={18}>
              <EyeCell />
              <LayerBody $indent={33}><EffectRow><Eye />外发光</EffectRow></LayerBody>
            </LayerItem>
            <LayerItem $height={18} $end>
              <EyeCell />
              <LayerBody $indent={33}><EffectRow><Eye />投影</EffectRow></LayerBody>
            </LayerItem>
            <LayerItem $height={36} $end>
              <EyeCell><Eye /></EyeCell>
              <LayerBody>
                <Thumb />
                <LayerName $italic>背景</LayerName>
                <LockMark><Glyph size={12}><path d={lockPath} /><path d="M10 11v4" strokeWidth="3" /></Glyph></LockMark>
              </LayerBody>
            </LayerItem>
          </LayerList>
          <PanelFooter>
            <IconButton $width={26} aria-label="链接图层"><Glyph size={14}><path d="M9 6H5c-5 0-5 8 0 8h4M11 6h4c5 0 5 8 0 8h-4M6 10h8" stroke="#888" /></Glyph></IconButton>
            <IconButton $width={26} aria-label="添加图层样式"><FxMark>fx.</FxMark></IconButton>
            {footerArt.map(([name, art, width]) => (
              <IconButton key={name} $width={width} aria-label={name}><Glyph size={13}>{art}</Glyph></IconButton>
            ))}
          </PanelFooter>
        </PanelColumn>
      </Workspace>

      <NewLayerDialog />
      <Badge>
        <svg width="49" height="50" viewBox="0 0 49 50" fill="none" stroke="currentColor" strokeWidth="4.500" strokeLinecap="round" aria-hidden>
          <path d="M3.500 8v30c0 8 6 11 12 8l26-14c6-4 6-11 0-15L18 4c-4-2-7 0-7 5v25c0 4 3 5 5 3.500" />
          <path d="M19 18v13l10-6.500z" fill="currentColor" stroke="none" />
          <path d="M32 20v9" strokeWidth="1.500" strokeLinecap="butt" />
        </svg>
        <BadgeText>
          <BadgeName>溜溜自学</BadgeName>
          <BadgeUrl>zixue.3D66.COM</BadgeUrl>
        </BadgeText>
      </Badge>
      <Pointer width="18" height="25" viewBox="0 0 18 25" fill="#fff" stroke="#333" aria-hidden>
        <path d="M1 1v19l5-4 4 8 4-2-4-7h6z" />
      </Pointer>
    </Screen>
  );
}
